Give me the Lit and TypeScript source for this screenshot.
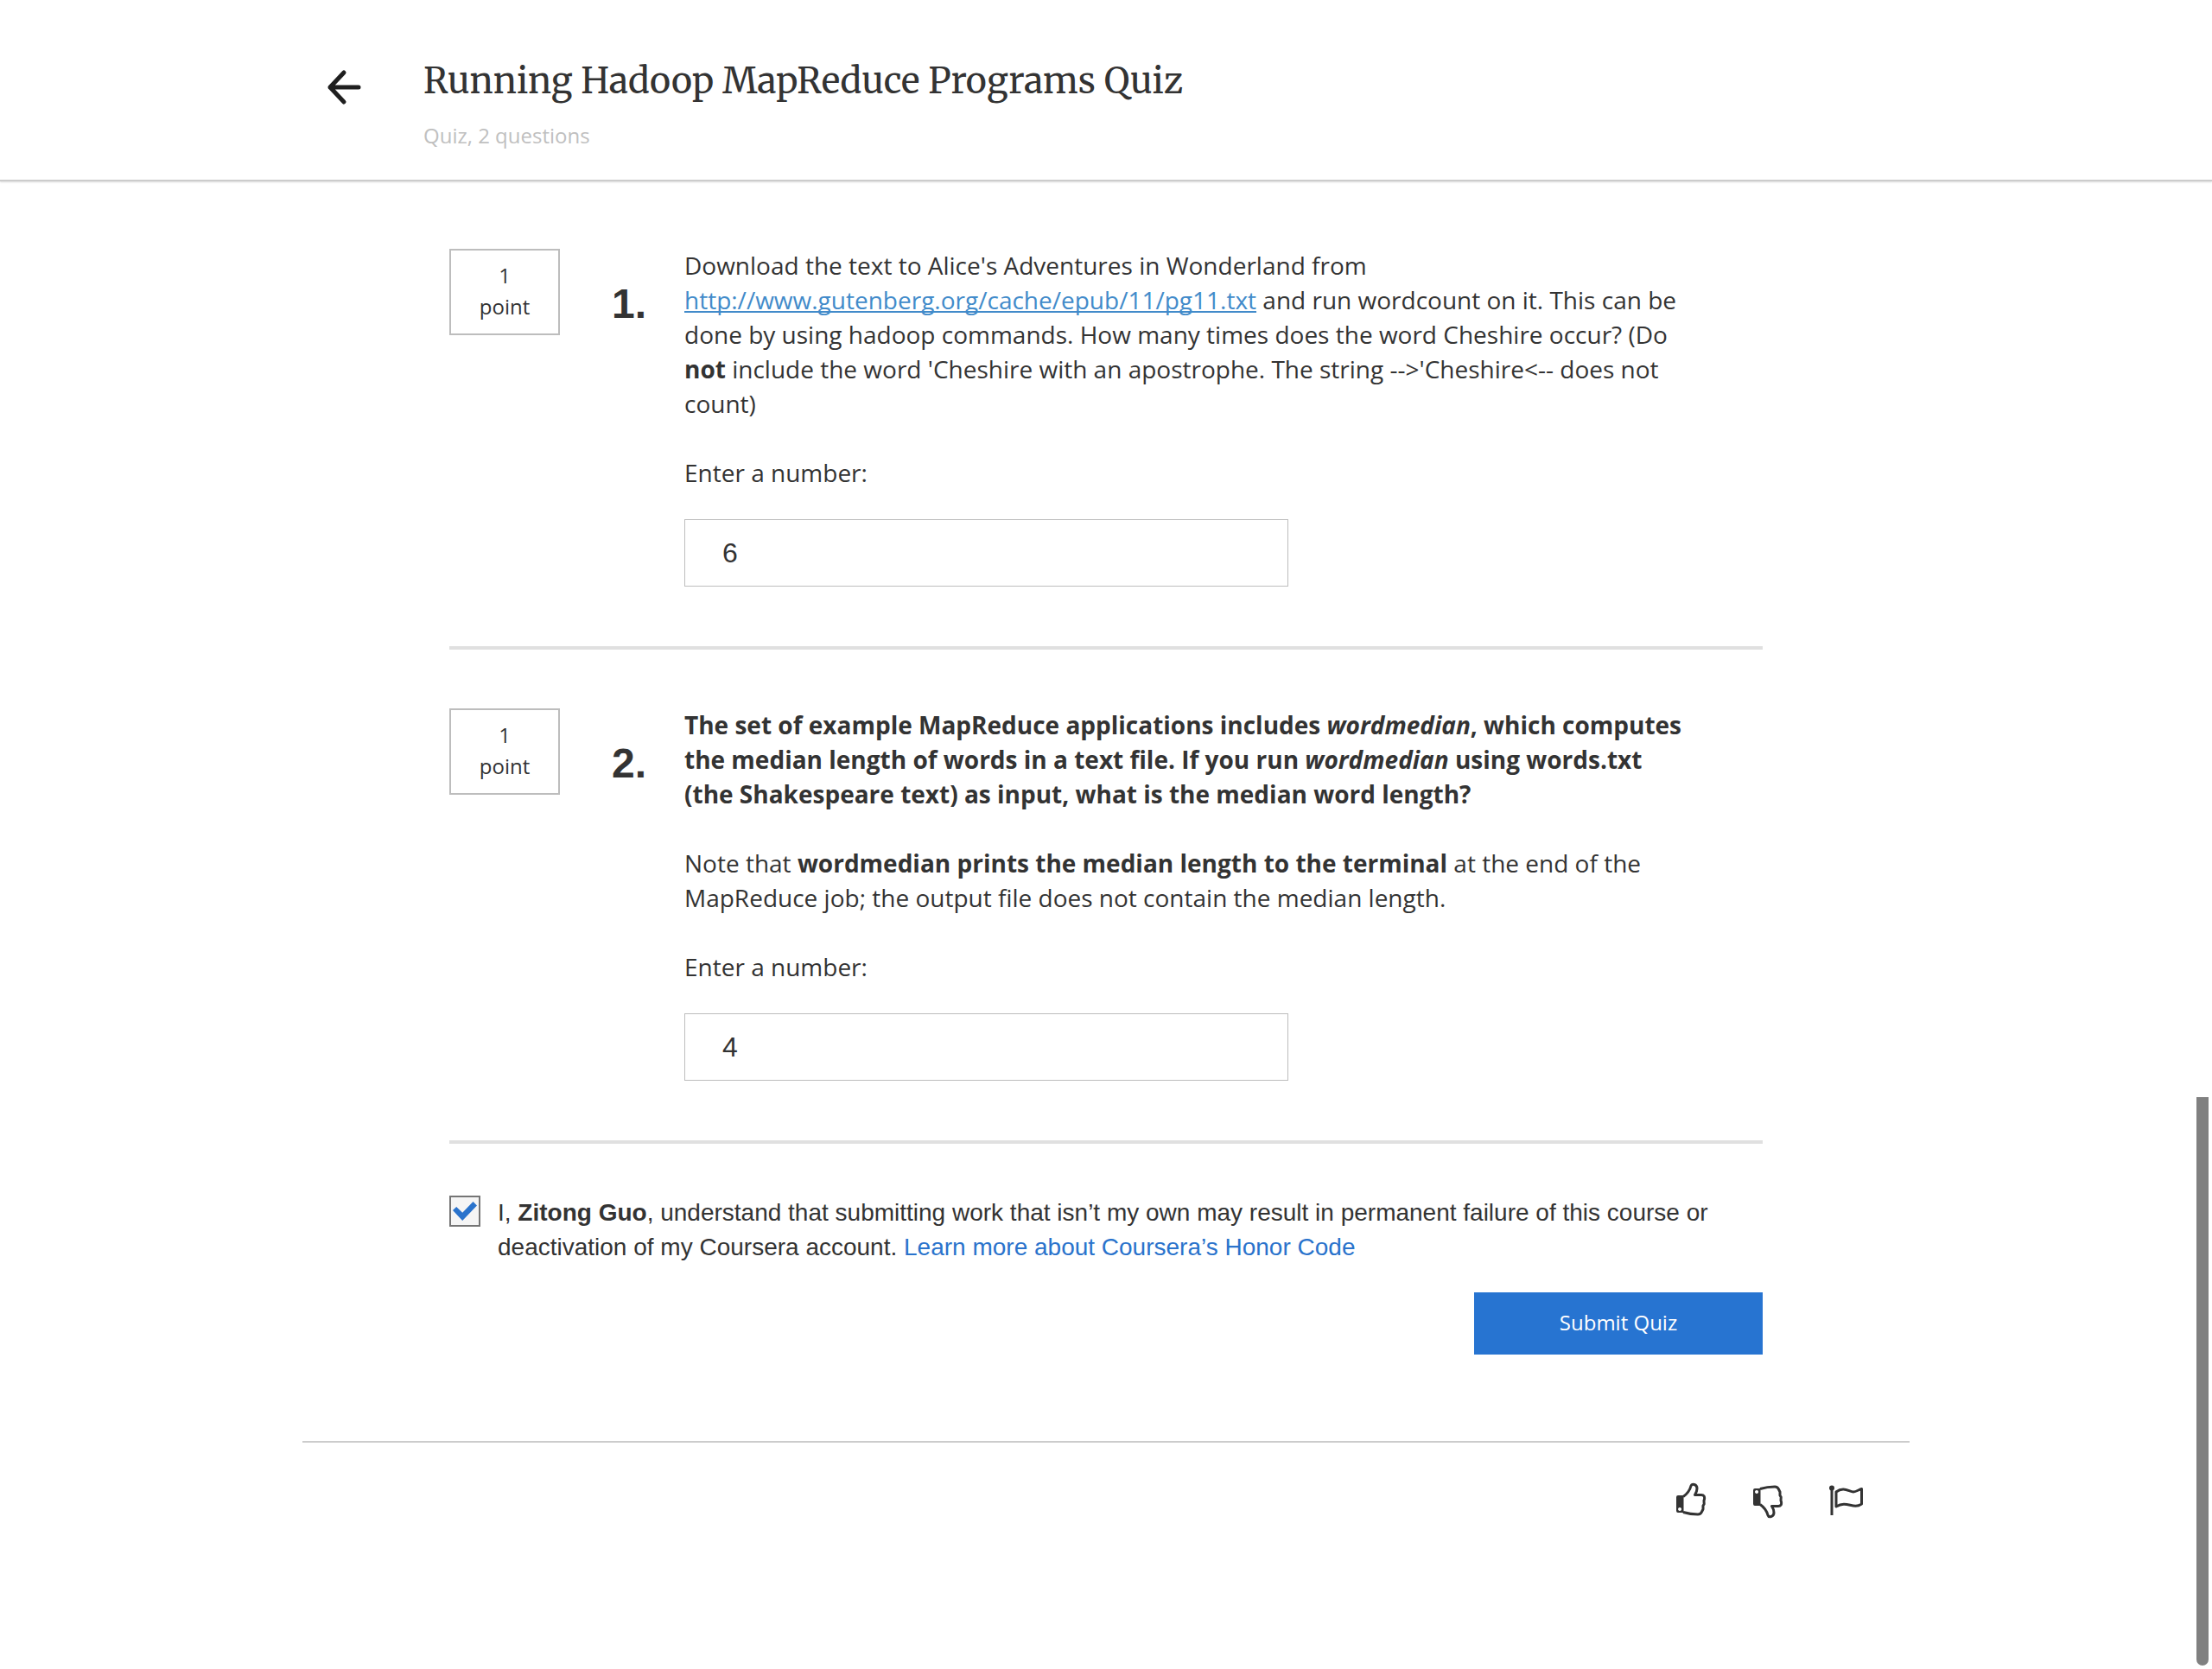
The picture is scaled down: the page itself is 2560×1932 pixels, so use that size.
import { LitElement, html, css } from "lit";
import { customElement } from "lit/decorators.js";

@customElement("quiz-question")
class QuizQuestion extends LitElement {
  static properties = {
    number: { type: Number },
    value: { type: String },
  };
  declare number: number;
  declare value: string;

  static styles = css`
    :host {
      display: block;
      border-bottom: 4px solid #e0e0e0;
      padding-bottom: 69px;
    }
    .question {
      display: grid;
      grid-template-columns: 128px 40px minmax(0, 1fr);
      align-items: start;
      column-gap: 60px;
    }
    .points {
      box-sizing: border-box;
      border: 2px solid #bdbdbd;
      padding: 11px 0 13px;
      text-align: center;
      font-size: 24px;
      line-height: 36px;
    }
    .number {
      margin: 0;
      padding-top: 34px;
      font: bold 48px/60px "Liberation Sans", Arial, sans-serif;
    }
    .content {
      margin: -1px 0 0 -16px;
      padding-right: 80px;
      font-size: 28px;
      line-height: 40px;
    }
    .label {
      display: block;
      margin-top: 40px;
    }
    .answer {
      box-sizing: border-box;
      display: block;
      width: 699px;
      max-width: 100%;
      height: 78px;
      margin-top: 34px;
      border: 1px solid #bdbdbd;
      border-radius: 0;
      padding: 0 43px;
      background: #fff;
      color: #333;
      font: 32px "Liberation Sans", Arial, sans-serif;
      outline: none;
    }
  `;

  render() {
    return html`
      <section class="question">
        <div class="points">1<br />point</div>
        <h2 class="number">${this.number}.</h2>
        <div class="content">
          <slot></slot>
          <label class="label" for="answer">Enter a number:</label>
          <input class="answer" id="answer" type="text" inputmode="numeric" .value=${this.value} />
        </div>
      </section>
    `;
  }
}

@customElement("app-root")
class AppRoot extends LitElement {
  static styles = css`
    :host {
      display: block;
      min-height: 100vh;
      background: #fff;
      color: #333;
      font-family: "Open Sans", sans-serif;
    }
    a {
      color: #2a73cc;
      text-decoration: none;
    }
    .header {
      box-sizing: border-box;
      border-bottom: 2px solid #cccccc;
      box-shadow: 0 1px 2px #dddddd;
    }
    .bar {
      display: flex;
      gap: 70px;
      max-width: 1860px;
      margin: 0 auto;
      padding: 60px 0 34px 28px;
      box-sizing: border-box;
    }
    .icon-button {
      display: block;
      border: 0;
      padding: 0;
      background: none;
      color: #333;
      cursor: pointer;
    }
    .icon-button svg {
      display: block;
    }
    .back {
      align-self: start;
      padding-top: 20px;
      color: #1f1f1f;
    }
    .title {
      margin: 0;
      font: 400 41px/68px "Merriweather", "Liberation Serif", serif;
    }
    .subtitle {
      margin: 12px 0 0;
      color: #c0c0c0;
      font-size: 24px;
      line-height: 34px;
    }
    .quiz {
      display: flex;
      flex-direction: column;
      gap: 68px;
      max-width: 1520px;
      margin: 0 auto;
      padding: 78px 0 100px;
    }
    .text {
      margin: 0;
    }
    .text + .text {
      margin-top: 40px;
    }
    .source {
      color: #428bca;
      text-decoration: underline;
      text-decoration-skip-ink: none;
    }
    .honor {
      display: flex;
      align-items: start;
      gap: 20px;
      margin-top: -8px;
      font: 28px/40px "Liberation Sans", Arial, sans-serif;
    }
    .agree {
      flex: none;
      appearance: none;
      width: 36px;
      height: 36px;
      margin: 0;
      border: 2px solid #757575;
      background: #f5f5f5;
      display: grid;
      place-items: center;
    }
    .agree:checked::before {
      content: "";
      width: 28px;
      height: 22px;
      background: #2a73cc;
      clip-path: polygon(0 45%, 15% 27%, 40% 58%, 84% 0, 100% 20%, 40% 100%);
    }
    .submit {
      align-self: end;
      width: 334px;
      height: 72px;
      margin-top: -36px;
      border: 0;
      padding: 0 0 4px;
      background: #2774d1;
      color: #fff;
      font: 24px "Open Sans", sans-serif;
      cursor: pointer;
    }
    .footer {
      display: flex;
      justify-content: flex-end;
      gap: 49px;
      box-sizing: border-box;
      max-width: 1860px;
      margin: 0 auto;
      border-top: 2px solid #cccccc;
      padding: 46px 52px 0;
    }
    .scrollbar {
      position: fixed;
      right: 4px;
      bottom: 4px;
      width: 14px;
      height: 658px;
      border-radius: 0 0 7px 7px;
      background: #808080;
    }
  `;

  render() {
    return html`
      <header class="header">
        <div class="bar">
          <button class="icon-button back" aria-label="Back">
            <svg width="42" height="42" viewBox="0 0 42 42" fill="none" stroke="currentColor" stroke-width="5" stroke-linecap="round" stroke-linejoin="round">
              <path d="M37 21H4M20 4L4 21L20 38" />
            </svg>
          </button>
          <div>
            <h1 class="title">Running Hadoop MapReduce Programs Quiz</h1>
            <p class="subtitle">Quiz, 2 questions</p>
          </div>
        </div>
      </header>

      <main class="quiz">
        <quiz-question .number=${1} .value=${"6"}>
          <p class="text">
            Download the text to Alice's Adventures in Wonderland from
            <a class="source" href="http://www.gutenberg.org/cache/epub/11/pg11.txt">http://www.gutenberg.org/cache/epub/11/pg11.txt</a>
            and run wordcount on it. This can be done by using hadoop commands. How many times does the word
            Cheshire occur? (Do <b>not</b> include the word 'Cheshire with an apostrophe. The string
            --&gt;'Cheshire&lt;-- does not count)
          </p>
        </quiz-question>

        <quiz-question .number=${2} .value=${"4"}>
          <p class="text">
            <b>The set of example MapReduce applications includes <i>wordmedian</i>, which computes the median
            length of words in a text file. If you run <i>wordmedian</i> using words.txt (the Shakespeare text)
            as input, what is the median word length?</b>
          </p>
          <p class="text">
            Note that <b>wordmedian prints the median length to the terminal</b> at the end of the MapReduce
            job; the output file does not contain the median length.
          </p>
        </quiz-question>

        <div class="honor">
          <input class="agree" id="agree" type="checkbox" checked />
          <label for="agree">
            I, <b>Zitong Guo</b>, understand that submitting work that isn’t my own may result in permanent
            failure of this course or deactivation of my Coursera account.
            <a href="#honor-code">Learn more about Coursera’s Honor Code</a>
          </label>
        </div>
        <button class="submit">Submit Quiz</button>
      </main>

      <footer class="footer">
        <button class="icon-button" aria-label="Like">
          <svg width="40" height="42" viewBox="0 0 40 42" fill="none" stroke="currentColor" stroke-width="3" stroke-linejoin="round">
            <path d="M10 16.5C15 13 18 8 19 4C20 1 26 2 26 7C26 10 24.5 13 23.5 14.5H31C34 14.5 35 16.5 34.5 19.5L34 21L34.2 25L33 27L33 31L31.5 34C30.5 36.5 29 37 27 37C20 37 15 36 10 34.5" />
            <path fill="currentColor" fill-rule="evenodd" stroke="none" d="M4 15H10.5V35H4Q2 35 2 33V17Q2 15 4 15ZM6 29a2 2 0 1 0 .1 0Z" />
          </svg>
        </button>
        <button class="icon-button" aria-label="Dislike">
          <svg width="40" height="42" viewBox="0 0 40 42" fill="none" stroke="currentColor" stroke-width="3" stroke-linejoin="round">
            <path d="M10 25.5C15 29 18 34 19 38C20 41 26 40 26 35C26 32 24.5 29 23.5 27.5H31C34 27.5 35 25.5 34.5 22.5L34 21L34.2 17L33 15L33 11L31.5 8C30.5 5.5 29 5 27 5C20 5 15 6 10 7.5" />
            <path fill="currentColor" fill-rule="evenodd" stroke="none" d="M4 7H10.5V27H4Q2 27 2 25V9Q2 7 4 7ZM6 9a2 2 0 1 0 .1 0Z" />
          </svg>
        </button>
        <button class="icon-button" aria-label="Report">
          <svg width="42" height="42" viewBox="0 0 42 42" fill="none" stroke="currentColor" stroke-width="3" stroke-linejoin="round">
            <path d="M4 5V38M9 11C18 4 24 11 29 11C32 11 36 8 38.5 7.5V25C28 32 22 20 9 28Z" />
            <circle cx="4" cy="6.5" r="3" fill="currentColor" stroke="none" />
          </svg>
        </button>
      </footer>
      <div class="scrollbar" aria-hidden="true"></div>
    `;
  }
}
